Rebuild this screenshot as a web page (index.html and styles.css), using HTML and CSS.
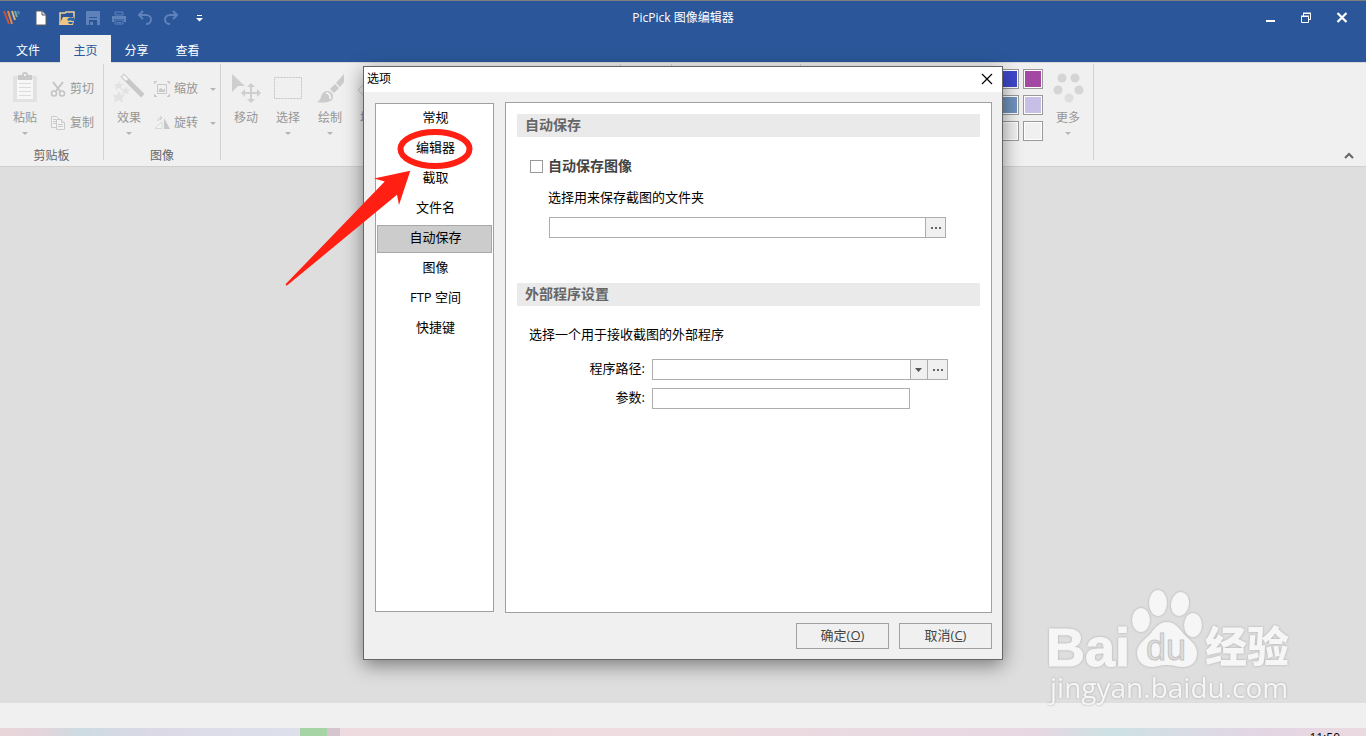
FILE: index.html
```html
<!DOCTYPE html>
<html lang="zh-CN">
<head>
	<meta charset="UTF-8">
	<meta name="viewport" content="width=device-width, initial-scale=1.0">
	<title>PicPick 图像编辑器</title>
	<link rel="stylesheet" href="styles.css">
</head>
<body>

<!-- Title bar -->
<header class="titlebar">
	<div class="quick">
		<svg class="logo" width="18" height="18" viewBox="0 0 18 18" fill="none" stroke-width="2">
			<path d="M2 2l5 13" stroke="#c9553f"/>
			<path d="M6 2l4 13" stroke="#e08a4a"/>
			<path d="M10 2l3 9" stroke="#d9b27c"/>
			<path d="M13 2l2 6" stroke="#6fae9a"/>
			<path d="M16 2l1 3" stroke="#5c86c4"/>
		</svg>
		<button aria-label="新建"><svg width="16" height="16" viewBox="0 0 16 16"><path d="M3 1h6l4 4v10H3z" fill="#fff" stroke="#5f5f5f"/><path d="M9 1v4h4" fill="#ddd" stroke="#5f5f5f"/></svg></button>
		<button aria-label="打开"><svg width="18" height="16" viewBox="0 0 18 16"><path d="M2 15V3h5l1-1h8v5" fill="#2b579a" stroke="#f0cf98" stroke-width="1.5"/><path d="M1 15l4-8h12l-2 8z" fill="#edc584"/><path d="M9 10a4 4 0 0 1 6-2l1-2 1 5h-5l2-1a3 3 0 0 0-3 1zM10 12h5l-1 2h-3z" fill="#2668ae"/></svg></button>
		<button disabled aria-label="保存"><svg width="16" height="16" viewBox="0 0 16 16" fill="#5f82bb"><path d="M1 1h14v14H1z"/><path d="M4 7h8v1H4zM4 10h8v5H4z" fill="#2b579a"/><path d="M5 12h3v3H5z"/></svg></button>
		<button disabled aria-label="打印"><svg width="16" height="16" viewBox="0 0 16 16" fill="#5f82bb"><path d="M4 2h8v3H4z" fill="none" stroke="#5f82bb"/><path d="M1 6h14v6h-2V9H3v3H1z"/><path d="M4 10h8v4H4z" fill="none" stroke="#5f82bb"/><path d="M6 12h4v1H6z"/></svg></button>
		<button disabled aria-label="撤销"><svg width="16" height="16" viewBox="0 0 16 16" fill="none" stroke="#5f82bb" stroke-width="2"><path d="M6 1L2 5l4 4M2 5h7a5 4.500 0 0 1 0 9"/></svg></button>
		<button disabled aria-label="重做"><svg width="16" height="16" viewBox="0 0 16 16" fill="none" stroke="#5f82bb" stroke-width="2"><path d="M10 1l4 4-4 4M14 5H7a5 4.500 0 0 0 0 9"/></svg></button>
		<button class="customize" aria-label="自定义"><svg width="7" height="7" viewBox="0 0 7 7" fill="#fff"><path d="M1 0h5v1H1zM0 3h7L3.500 6.500z"/></svg></button>
	</div>
	<h1>PicPick 图像编辑器</h1>
	<div class="window-buttons">
		<button aria-label="最小化"><svg width="12" height="12" viewBox="0 0 12 12"><path d="M2 8h9v2H2z" fill="#fff"/></svg></button>
		<button aria-label="还原"><svg width="12" height="12" viewBox="0 0 12 12" fill="none" stroke="#fff"><path d="M1.500 4.500h7v6h-7z"/><path d="M1 4h8M3.500 4V1.500h7v6H9M3 1h8"/></svg></button>
		<button aria-label="关闭"><svg width="12" height="12" viewBox="0 0 12 12"><path d="M1.500 1l9 9M10.500 1l-9 9" stroke="#fff" stroke-width="2.200"/></svg></button>
	</div>
</header>

<nav class="tabs">
	<a href="#" class="file">文件</a>
	<a href="#" class="active">主页</a>
	<a href="#">分享</a>
	<a href="#">查看</a>
</nav>

<!-- Ribbon -->
<section class="ribbon">
	<div class="group clipboard">
		<div class="group-body">
			<button class="big" disabled>
				<svg width="32" height="32" viewBox="0 0 32 32"><path d="M4 4h24v26H4z" fill="#e2e2e2"/><path d="M8 7h16v20H8z" fill="#f7f7f7"/><path d="M9 3h4a3 3 0 0 1 6 0h4v5H9z" fill="#c9c9c9"/><path d="M15 2h2v2h-2z" fill="#f0f0f0"/><path d="M10 11.500h12M10 15.500h12M10 19.500h12M10 23.500h12" stroke="#dcdcdc"/></svg>
				<span>粘贴</span><i class="arrow"></i>
			</button>
			<div class="small-list">
				<button class="small" disabled>
					<svg width="16" height="16" viewBox="0 0 16 16" fill="none" stroke="#c4c4c4" stroke-width="1.500"><path d="M3 1l7 9M13 1l-7 9" stroke-width="2"/><circle cx="4" cy="12.500" r="2.500"/><circle cx="12" cy="12.500" r="2.500"/></svg>
					<span>剪切</span>
				</button>
				<button class="small" disabled>
					<svg width="16" height="16" viewBox="0 0 16 16" fill="#f3f3f3" stroke="#cacaca"><path d="M1.500 1.500h5l3 3v8h-8z"/><path d="M3 4.500h3M3 6.500h3M3 8.500h3"/><path d="M6.500 4.500h5l3 3v7h-8z"/><path d="M11.500 4.500v3h3M8 9.500h5M8 11.500h5"/></svg>
					<span>复制</span>
				</button>
			</div>
		</div>
		<p class="group-name">剪贴板</p>
	</div>

	<div class="group image">
		<div class="group-body">
			<button class="big" disabled>
				<svg width="32" height="32" viewBox="0 0 32 32"><path d="M11 5l17 17" stroke="#c8c8c8" stroke-width="5" stroke-linecap="square"/><path d="M11 5l2 2" stroke="#f4f4f4" stroke-width="3" stroke-linecap="square"/><path d="M6 8l1 4h4l-3 2 1 4-3-2-4 2 1-4-2-2h4zM13 14l1 3h4l-3 2 1 4-3-2-4 2 1-4-2-2h4zM6 19l2 4h4l-3 3 1 5-4-3-5 3 1-5-3-3h5z" fill="#e2e2e2"/></svg>
				<span>效果</span><i class="arrow"></i>
			</button>
			<div class="small-list">
				<button class="small" disabled>
					<svg width="16" height="16" viewBox="0 0 16 16" fill="none" stroke="#c9c9c9"><path d="M3.500 3.500h9v9h-9z"/><path d="M0 0l2 2M16 0l-2 2M0 16l2-2M16 16l-2-2M.5 3V.5H3M13 .5h2.500V3M.5 13v2.500H3M13 15.500h2.500V13"/><path d="M5 11V8l2-1 2 2 2-2v4z" fill="#c9c9c9" stroke="none"/></svg>
					<span>缩放</span><i class="arrow"></i>
				</button>
				<button class="small" disabled>
					<svg width="16" height="16" viewBox="0 0 16 16"><path d="M10 3v11h6z" fill="#c6c6c6"/><path d="M8 7v6.500H1z" fill="#f4f4f4" stroke="#d8d8d8"/><path d="M4 6c0-2 1-3 4-3M6 1l2 2-2 2" fill="none" stroke="#c9c9c9"/></svg>
					<span>旋转</span><i class="arrow"></i>
				</button>
			</div>
		</div>
		<p class="group-name">图像</p>
	</div>

	<div class="group tools">
		<div class="group-body">
			<button class="big" disabled>
				<svg width="32" height="32" viewBox="0 0 32 32" fill="#cecece"><path d="M2 2l13 12H8l-6 6z"/><path d="M21 11l4 4h-3v5h5v-3l4 4-4 4v-3h-5v5h3l-4 4-4-4h3v-5h-5v3l-4-4 4-4v3h5v-5h-3z"/></svg>
				<span>移动</span>
			</button>
			<button class="big" disabled>
				<svg width="32" height="32" viewBox="0 0 32 32"><path d="M2.500 5.500h27v21h-27z" fill="none" stroke="#c4c4c4" stroke-dasharray="2 1"/></svg>
				<span>选择</span><i class="arrow"></i>
			</button>
			<button class="big" disabled>
				<svg width="32" height="32" viewBox="0 0 32 32" fill="#cbcbcb"><path d="M30 2v8l-4 5-4-4zM21 12l4 4-5 5-4-4zM3 30c5-2 3-7 7-10 5-3 10 1 9 6-2 5-10 5-16 4z"/><path d="M12 21c3 0 5 3 4 6" fill="none" stroke="#f0f0f0" stroke-width="2"/></svg>
				<span>绘制</span><i class="arrow"></i>
			</button>
			<button class="big" disabled>
				<svg width="32" height="32" viewBox="0 0 32 32" fill="none" stroke="#cbcbcb"><path d="M2 18L14 6l12 12-10 10h-4z"/></svg>
				<span>填充</span>
			</button>
		</div>
	</div>
	<div class="group size"></div>
	<div class="group style"></div>

	<div class="group colors">
		<div class="group-body">
			<div class="swatches">
				<button class="swatch blue" aria-label="蓝色"></button>
				<button class="swatch purple" aria-label="紫色"></button>
				<button class="swatch steel" aria-label="灰蓝色"></button>
				<button class="swatch lavender" aria-label="淡紫色"></button>
				<button class="swatch" aria-label="空"></button>
				<button class="swatch" aria-label="空"></button>
			</div>
			<button class="big" disabled>
				<svg width="32" height="32" viewBox="0 0 32 32" fill="#d5d5d5"><circle cx="10" cy="6" r="4.500"/><circle cx="23" cy="6" r="4.500"/><circle cx="6" cy="18" r="4.500"/><circle cx="27" cy="18" r="4.500"/><circle cx="17" cy="26" r="4.500" fill="#dedede"/></svg>
				<span>更多</span><i class="arrow"></i>
			</button>
		</div>
	</div>

	<button class="collapse" aria-label="折叠功能区"><svg width="10" height="8" viewBox="0 0 10 8"><path d="M1 6l4-4 4 4" fill="none" stroke="#666" stroke-width="2"/></svg></button>
</section>

<main class="canvas">
	<svg class="watermark" width="260" height="126" viewBox="1040 584 260 126">
		<g class="mark">
			<text x="1046" y="666" class="mark-bai">Bai</text>
			<ellipse cx="1141" cy="620" rx="9" ry="12"/>
			<ellipse cx="1158" cy="603" rx="9" ry="13"/>
			<ellipse cx="1180" cy="604" rx="9" ry="12" transform="rotate(10 1180 604)"/>
			<ellipse cx="1193" cy="625" rx="9" ry="12"/>
			<path d="M1167 622c8 0 12 6 16 11 6 7 14 11 14 20 0 9-6 14-14 14-6 0-10-2-16-2s-10 2-15 2c-9 0-15-6-15-14 0-9 8-13 14-20 4-5 8-11 16-11z"/>
			<text x="1205" y="662" class="mark-cn">经验</text>
			<text x="1050" y="698" class="mark-url">jingyan.baidu.com</text>
		</g>
		<text x="1146" y="660" class="mark-du">du</text>
	</svg>
</main>

<footer class="statusbar"></footer>
<div class="taskbar">
	<span class="task"></span>
	<time>11:50</time>
</div>

<!-- Options dialog -->
<div class="dialog-layer">
	<form class="dialog" role="dialog" aria-labelledby="dialog-title">
		<div class="dialog-title">
			<h2 id="dialog-title">选项</h2>
			<button type="button" aria-label="关闭"><svg width="12" height="12" viewBox="0 0 12 12"><path d="M1 1l10 10M11 1L1 11" stroke="#000" stroke-width="1.200"/></svg></button>
		</div>
		<div class="dialog-body">
			<nav class="pages">
				<a href="#">常规</a>
				<a href="#">编辑器</a>
				<a href="#">截取</a>
				<a href="#">文件名</a>
				<a href="#" class="active">自动保存</a>
				<a href="#">图像</a>
				<a href="#">FTP 空间</a>
				<a href="#">快捷键</a>
			</nav>
			<div class="page">
				<h3>自动保存</h3>
				<div class="autosave">
					<label class="check"><input type="checkbox">自动保存图像</label>
					<label for="folder">选择用来保存截图的文件夹</label>
					<div class="field">
						<input type="text" id="folder">
						<button type="button" class="browse" aria-label="浏览文件夹"><svg width="10" height="2" viewBox="0 0 10 2"><path d="M0 0h2v2H0zM4 0h2v2H4zM8 0h2v2H8z" fill="#666"/></svg></button>
					</div>
				</div>
				<h3>外部程序设置</h3>
				<div class="external">
					<p>选择一个用于接收截图的外部程序</p>
					<div class="row">
						<label for="path">程序路径:</label>
						<div class="field">
							<select id="path"><option></option></select>
							<button type="button" class="browse" aria-label="浏览程序"><svg width="10" height="2" viewBox="0 0 10 2"><path d="M0 0h2v2H0zM4 0h2v2H4zM8 0h2v2H8z" fill="#666"/></svg></button>
						</div>
					</div>
					<div class="row">
						<label for="params">参数:</label>
						<input type="text" id="params">
					</div>
				</div>
			</div>
		</div>
		<div class="actions">
			<button type="button">确定(<u>O</u>)</button>
			<button type="button">取消(<u>C</u>)</button>
		</div>

		<svg class="pointer" width="200" height="165" viewBox="280 125 200 165">
			<ellipse cx="435" cy="149" rx="34.500" ry="17" fill="none" stroke="#ff2013" stroke-width="6"/>
			<path d="M410.300 170.700L374 178.500l10.700 3L285.500 284.300l1.200 1.500L397 194.700l2 10.300z" fill="#ff2013"/>
		</svg>
	</form>
</div>

</body>
</html>
```
FILE: styles.css
```css
* {
	box-sizing: border-box;
}
body {
	margin: 0;
	min-height: 100vh;
	display: flex;
	flex-direction: column;
	position: relative;
	background-color: #dedede;
	font-family: "Open Sans", "Noto Sans CJK SC", sans-serif;
	font-size: 12px;
	line-height: 16px;
}
h1, h2, h3, p {
	margin: 0;
	font-size: 12px;
	font-weight: normal;
}
a {
	color: inherit;
	text-decoration: none;
}
button {
	padding: 0;
	border: none;
	background: none;
	font: inherit;
	color: inherit;
}
svg {
	display: block;
	flex-shrink: 0;
}

/* title bar */
.titlebar {
	display: grid;
	grid-template-columns: 1fr auto 1fr;
	align-items: center;
	height: 35px;
	border-top: 1px solid #7d7d7d;
	background-color: #2b579a;
	color: #fff;
}
.quick, .window-buttons {
	display: flex;
	align-items: center;
}
.quick {
	padding-left: 2px;
}
.logo {
	margin-right: 8px;
}
.quick button {
	display: flex;
	justify-content: center;
	width: 26px;
}
.quick .customize {
	width: 30px;
}
.window-buttons {
	justify-content: flex-end;
	padding-right: 6px;
}
.window-buttons button {
	display: flex;
	justify-content: center;
	width: 36px;
}

/* tabs */
.tabs {
	display: flex;
	height: 27px;
	background-color: #2b579a;
	color: #fff;
}
.tabs a {
	width: 51px;
	height: 28px;
	line-height: 32px;
	text-align: center;
}
.tabs .file {
	width: 56px;
	margin-right: 4px;
}
.tabs .active {
	z-index: 1;
	background-color: #f0f0f0;
	color: #2b579a;
}

/* ribbon */
.ribbon {
	display: flex;
	padding: 1px 0 6px;
	border-top: 1px solid #d8d8d8;
	border-bottom: 1px solid #d0d0d0;
	background-color: #f0f0f0;
}
.group {
	display: flex;
	flex-direction: column;
	justify-content: space-between;
	min-height: 96px;
	padding: 0 4px;
	border-right: 1px solid #d2d2d2;
}
.group-body {
	display: flex;
	gap: 4px;
	color: #969696;
}
.group-name {
	line-height: 8px;
	text-align: center;
	color: #666;
}
.big {
	display: flex;
	flex-direction: column;
	align-items: center;
	width: 42px;
	padding-top: 8px;
}
.big span {
	margin-top: 6px;
}
.big .arrow {
	margin-top: 6px;
}
.arrow {
	width: 6px;
	border: 3px solid transparent;
	border-top-color: #b5b5b5;
	border-bottom: none;
}
.small-list {
	padding-top: 8px;
}
.small {
	display: flex;
	align-items: center;
	gap: 4px;
	height: 34px;
}
.small .arrow {
	margin-left: 8px;
}
.clipboard {
	width: 104px;
}
.image {
	width: 117px;
}
.tools {
	width: 400px;
}
.tools .group-body {
	gap: 0;
}
.size {
	width: 51px;
}
.style {
	width: 129px;
}
.colors {
	width: 293px;
}
.colors .group-body {
	justify-content: flex-end;
}
.swatches {
	display: grid;
	grid-template-columns: 20px 20px;
	grid-auto-rows: 20px;
	gap: 6px 4px;
	padding-top: 5px;
}
.swatch {
	border: 1px solid #999;
	background-color: #f0f0f0;
	box-shadow: inset 0 0 0 1px #fff;
}
.blue {
	background-color: #3f48cc;
}
.purple {
	background-color: #a349a4;
}
.steel {
	background-color: #7092be;
}
.lavender {
	background-color: #c8bfe7;
}
.collapse {
	align-self: flex-end;
	margin-left: auto;
	padding-right: 12px;
}

/* canvas */
.canvas {
	flex: 1;
	position: relative;
}
.watermark {
	position: absolute;
	right: 66px;
	bottom: -7px;
}
.mark {
	fill: #f6f6f6;
	filter: drop-shadow(0 0 1px #aaa);
}
.mark-bai {
	font: bold 54px "Liberation Sans", sans-serif;
	stroke: #f6f6f6;
}
.mark-cn {
	font: 900 42px "Noto Sans CJK SC", sans-serif;
}
.mark-url {
	font: 28px "Open Sans", sans-serif;
}
.mark-du {
	font: 36px "Liberation Sans", sans-serif;
	fill: #dedede;
	stroke: #c4c4c4;
}
.statusbar {
	height: 25px;
	background-color: #f0f0f0;
}
.taskbar {
	display: flex;
	justify-content: space-between;
	height: 8px;
	padding: 0 26px 0 300px;
	overflow: hidden;
	background: linear-gradient(90deg, #e8d5da 0, #e4d5db 40px, #cddbe2 80px, #dcd9e6 160px, #dde0ec 290px, #eedbdf 345px, #eddce0 700px, #e6d7e2 1040px, #cce2e4 1110px, #e4d5e5 1260px, #ead9df 100%);
}
.task {
	width: 40px;
	border-right: 13px solid #d5c5ce;
	background-color: #a6d4a4;
}
.taskbar time {
	padding-top: 2px;
	color: #000;
}

/* options dialog */
.dialog-layer {
	position: absolute;
	inset: 0;
	z-index: 2;
	display: flex;
	justify-content: center;
	align-items: flex-start;
	padding-top: 66px;
}
.dialog {
	position: relative;
	width: 640px;
	border: 1px solid #666;
	background-color: #f0f0f0;
	box-shadow: 0 5px 18px rgba(0, 0, 0, 0.45);
	font-size: 13px;
	line-height: 20px;
	color: #000;
}
.dialog-title {
	display: flex;
	justify-content: space-between;
	align-items: center;
	height: 25px;
	padding: 0 9px 2px 3px;
	background-color: #fff;
}
.dialog-body {
	display: grid;
	grid-template-columns: 119px 1fr;
	gap: 11px;
	padding: 10px 10px 10px 11px;
}
.pages {
	display: flex;
	flex-direction: column;
	gap: 2px;
	margin: 1px 0;
	padding: 1px;
	border: 1px solid #a0a0a0;
	background-color: #fff;
}
.pages a {
	height: 28px;
	padding-left: 2px;
	border: 1px solid transparent;
	line-height: 22px;
	text-align: center;
}
.pages .active {
	border-color: #a8a8a8;
	background-color: #ccc;
}
.page {
	min-height: 511px;
	padding: 11px;
	border: 1px solid #a0a0a0;
	background-color: #fff;
}
.page h3 {
	height: 23px;
	padding-left: 8px;
	background-color: #eaeaea;
	font-size: 14px;
	font-weight: bold;
	line-height: 22px;
	color: #666;
}
.autosave {
	padding: 19px 34px 45px 31px;
}
.autosave > label {
	display: block;
}
.autosave .check {
	display: flex;
	align-items: center;
	gap: 5px;
	margin: 0 0 11px -18px;
	font-size: 14px;
	font-weight: bold;
	color: #444;
}
.check input {
	appearance: none;
	width: 13px;
	height: 13px;
	margin: 0;
	border: 1px solid #999;
	background-color: #fff;
}
.field {
	display: flex;
}
.autosave .field {
	padding: 10px 0 0 1px;
}
.field input {
	flex: 1;
}
input[type="text"], select {
	height: 21px;
	padding: 0 3px;
	border: 1px solid #adadad;
	border-radius: 0;
	background-color: #fff;
	font: inherit;
}
.browse {
	display: flex;
	justify-content: center;
	align-items: center;
	width: 21px;
	margin-left: -1px;
	border: 1px solid #adadad;
	background-color: #f0f0f0;
}
.external {
	padding: 18px 32px 0 12px;
}
.external p {
	margin-bottom: 15px;
	font-size: 13px;
}
.row {
	display: grid;
	grid-template-columns: 116px 1fr;
	gap: 7px;
	margin-bottom: 8px;
}
.row label {
	line-height: 18px;
	text-align: right;
}
.row select {
	appearance: none;
	flex: 1;
	background: url("data:image/svg+xml,%3Csvg xmlns='http://www.w3.org/2000/svg' width='17' height='19'%3E%3Cpath d='M0 0h17v19H0z' fill='%23f0f0f0'/%3E%3Cpath d='M0 0h1v19H0z' fill='%23adadad'/%3E%3Cpath d='M5 8h7l-3.5 4z' fill='%23555'/%3E%3C/svg%3E") right top no-repeat #fff;
}
#params {
	width: 258px;
}
.actions {
	display: flex;
	justify-content: flex-end;
	gap: 10px;
	padding: 0 10px 10px;
}
.actions button {
	width: 93px;
	height: 26px;
	padding-bottom: 2px;
	border: 1px solid #a0a0a0;
	color: #444;
}
.pointer {
	position: absolute;
	left: -84px;
	top: 58px;
	pointer-events: none;
}
```
